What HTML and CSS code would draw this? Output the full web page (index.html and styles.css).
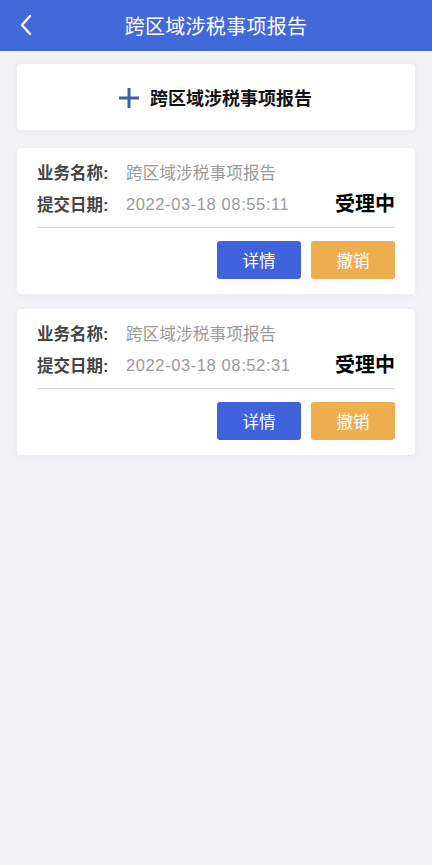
FILE: index.html
```html
<!DOCTYPE html>
<html lang="zh-CN">
<head>
    <meta charset="UTF-8">
    <meta name="viewport" content="width=device-width, initial-scale=1.0">
    <title>跨区域涉税事项报告</title>
    <link rel="stylesheet" href="styles.css">
</head>

<body>

    <header class="navbar">
        <span class="back">
            <svg width="14" height="22" viewBox="0 0 14 22">
                <path d="M11 2 L3 11 L11 20" fill="none" stroke="#fff" stroke-width="2.4" stroke-linecap="round" stroke-linejoin="round"/>
            </svg>
        </span>
        <h1 class="title">跨区域涉税事项报告</h1>
    </header>

    <section class="container">
        <div class="addCard">
            <svg class="plus" width="22" height="22" viewBox="0 0 22 22">
                <path d="M11 1 V21 M1 11 H21" stroke="#3b62a6" stroke-width="3"/>
            </svg>
            <span>跨区域涉税事项报告</span>
        </div>

        <div class="item">
            <div class="rows">
                <div class="row">
                    <span class="label">业务名称:</span>
                    <span class="value">跨区域涉税事项报告</span>
                </div>
                <div class="row">
                    <span class="label">提交日期:</span>
                    <span class="value date">2022-03-18 08:55:11</span>
                    <span class="status">受理中</span>
                </div>
            </div>
            <div class="actions">
                <button class="btn btnDetail">详情</button>
                <button class="btn btnCancel">撤销</button>
            </div>
        </div>

        <div class="item">
            <div class="rows">
                <div class="row">
                    <span class="label">业务名称:</span>
                    <span class="value">跨区域涉税事项报告</span>
                </div>
                <div class="row">
                    <span class="label">提交日期:</span>
                    <span class="value date">2022-03-18 08:52:31</span>
                    <span class="status">受理中</span>
                </div>
            </div>
            <div class="actions">
                <button class="btn btnDetail">详情</button>
                <button class="btn btnCancel">撤销</button>
            </div>
        </div>
    </section>

</body>

</html>
```

FILE: styles.css
```css
body {
    margin: 0;
    background-color: #f1f1f6;
    font-family: "Liberation Sans", "Noto Sans CJK SC", sans-serif;
    min-height: 865px;
}

.navbar {
    background-color: #4169da;
    height: 51px;
    display: flex;
    align-items: center;
    justify-content: center;
    position: relative;
}

.back {
    position: absolute;
    left: 19px;
    top: 14px;
}

.title {
    margin: 0;
    color: #fff;
    font-size: 20px;
    font-weight: 400;
    letter-spacing: 0.3px;
}

.container {
    padding: 13px 17px;
    display: flex;
    flex-direction: column;
    gap: 15px;
}

.addCard {
    background-color: #fff;
    height: 66px;
    margin-bottom: 3px;
    border-radius: 4px;
    box-shadow: 0 1px 6px rgba(0, 0, 0, 0.06);
    display: flex;
    align-items: center;
    justify-content: center;
    gap: 10px;
    font-size: 18px;
    font-weight: 700;
    color: #111;
    padding-right: 2px;
}

.plus {
    margin-top: 1px;
}

.item {
    background-color: #fff;
    border-radius: 4px;
    box-shadow: 0 1px 6px rgba(0, 0, 0, 0.04);
    padding: 0 20px;
}

.rows {
    padding: 8px 0 7px;
    border-bottom: 1px solid #dcdcdc;
}

.row {
    display: flex;
    align-items: center;
    height: 32px;
    font-size: 16.5px;
}

.label {
    width: 89px;
    font-weight: 700;
    color: #444;
}

.value {
    color: #999;
    flex: 1;
    letter-spacing: 0.2px;
}

.date {
    letter-spacing: 0.6px;
}

.status {
    font-size: 20px;
    font-weight: 700;
    color: #000;
    margin-bottom: 4px;
}

.actions {
    display: flex;
    justify-content: flex-end;
    gap: 10px;
    padding: 13px 0 15px;
}

.btn {
    width: 84px;
    height: 38px;
    border: none;
    border-radius: 3px;
    color: #fff;
    font-family: "Noto Sans CJK SC", sans-serif;
    font-size: 16.5px;
}

.btnDetail {
    background-color: #3e63dc;
}

.btnCancel {
    background-color: #eeae50;
}
```
